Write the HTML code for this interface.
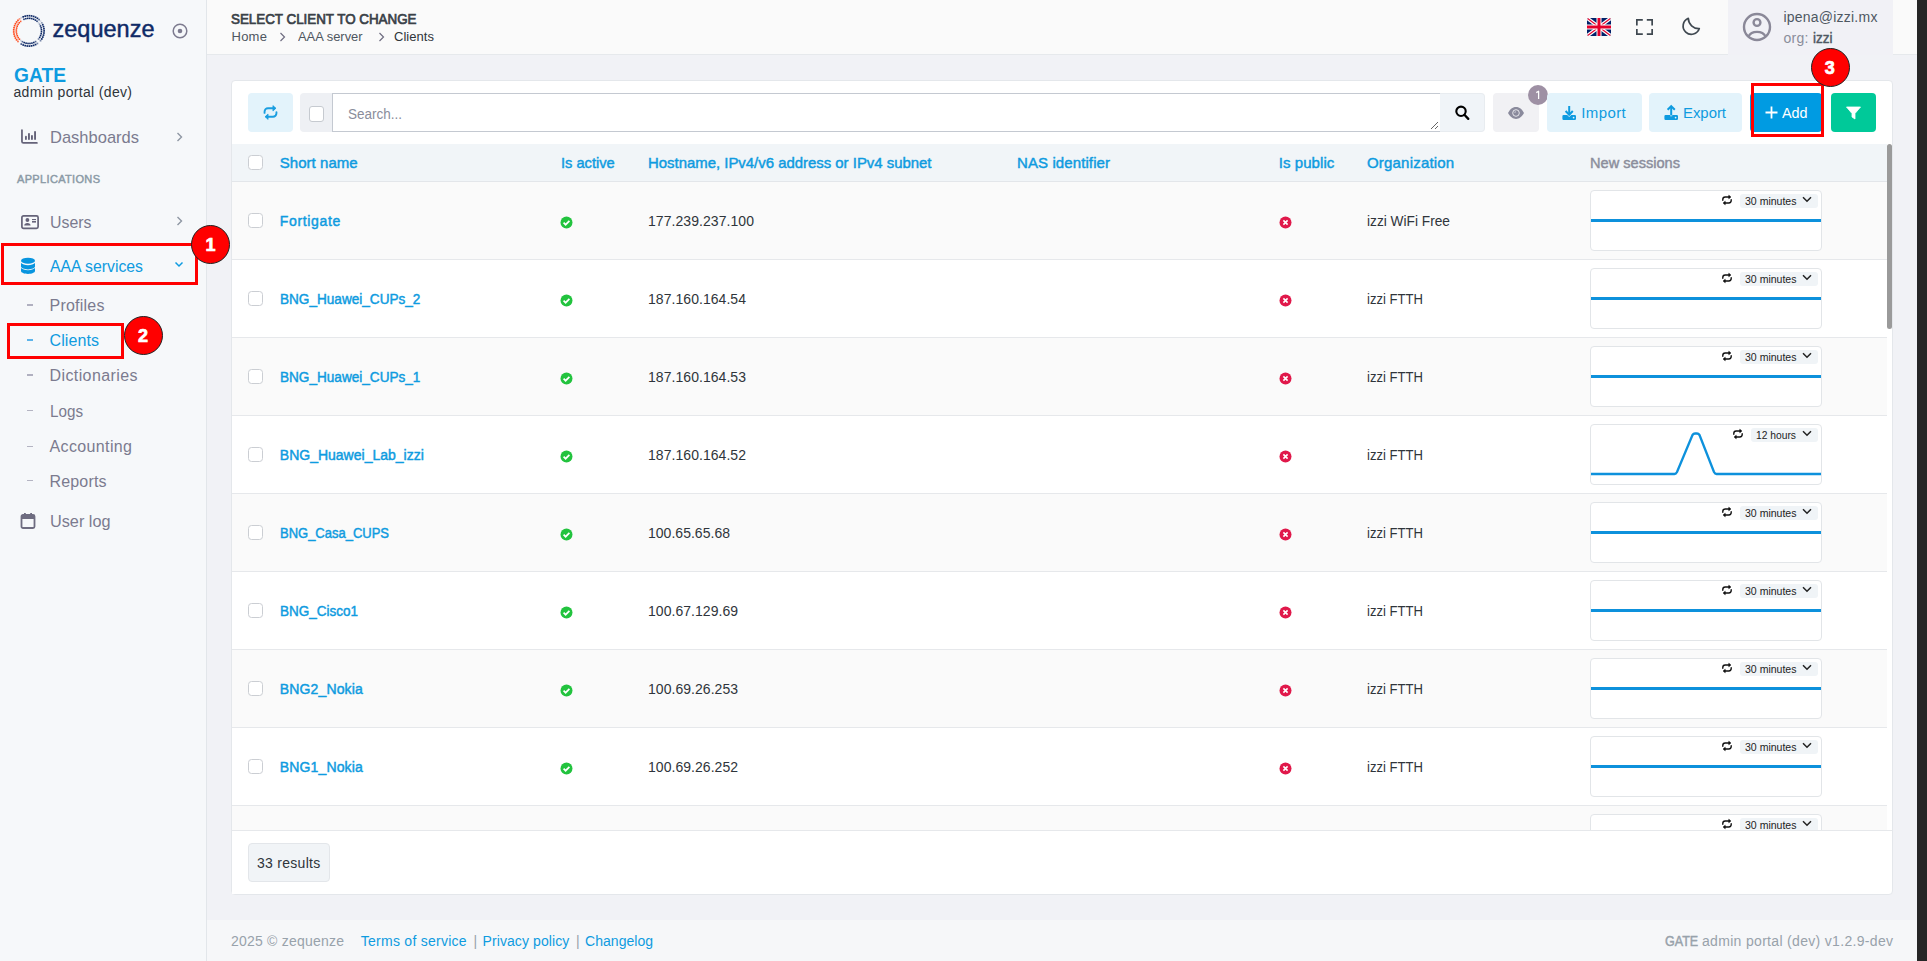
<!DOCTYPE html><html><head><meta charset="utf-8"><style>html,body{margin:0;padding:0;width:1927px;height:961px;overflow:hidden;position:relative;font-family:"Liberation Sans",sans-serif;}</style></head><body><div style="position:absolute;left:0px;top:0px;width:206px;height:961px;background:#f6f8fa;border-radius:0px;"></div>
<div style="position:absolute;left:206px;top:0px;width:1px;height:961px;background:#e2e6ea;border-radius:0px;"></div>
<div style="position:absolute;left:207px;top:0px;width:1710px;height:54px;background:#fafafa;border-radius:0px;"></div>
<div style="position:absolute;left:207px;top:54px;width:1710px;height:1px;background:#e6e9ec;border-radius:0px;"></div>
<div style="position:absolute;left:207px;top:55px;width:1710px;height:865px;background:#f1f2f6;border-radius:0px;"></div>
<div style="position:absolute;left:207px;top:920px;width:1710px;height:41px;background:#f6f7f9;border-radius:0px;"></div>
<div style="position:absolute;left:1917px;top:0px;width:10px;height:961px;background:#262626;border-radius:0px;"></div>
<svg style="position:absolute;left:0;top:0" width="60" height="60"><rect x="43.25" y="30.05" width="1.7" height="1.7" fill="#0f2a66" opacity="1.00"/><rect x="43.10" y="32.17" width="1.7" height="1.7" fill="#0f2a66" opacity="1.00"/><rect x="42.66" y="34.24" width="1.7" height="1.7" fill="#0f2a66" opacity="1.00"/><rect x="41.94" y="36.23" width="1.7" height="1.7" fill="#0f2a66" opacity="1.00"/><rect x="40.94" y="38.10" width="1.7" height="1.7" fill="#0f2a66" opacity="1.00"/><rect x="39.69" y="39.82" width="1.7" height="1.7" fill="#0f2a66" opacity="0.57"/><rect x="36.55" y="42.65" width="1.7" height="1.7" fill="#0f2a66" opacity="0.57"/><rect x="34.71" y="43.71" width="1.7" height="1.7" fill="#0f2a66" opacity="1.00"/><rect x="32.75" y="44.51" width="1.7" height="1.7" fill="#0f2a66" opacity="1.00"/><rect x="30.69" y="45.02" width="1.7" height="1.7" fill="#0f2a66" opacity="1.00"/><rect x="28.58" y="45.24" width="1.7" height="1.7" fill="#0f2a66" opacity="1.00"/><rect x="26.46" y="45.17" width="1.7" height="1.7" fill="#0f2a66" opacity="1.00"/><rect x="24.37" y="44.80" width="1.7" height="1.7" fill="#0f2a66" opacity="1.00"/><rect x="22.36" y="44.14" width="1.7" height="1.7" fill="#0f2a66" opacity="1.00"/><rect x="20.45" y="43.21" width="1.7" height="1.7" fill="#0f2a66" opacity="0.80"/><rect x="17.12" y="40.61" width="1.7" height="1.7" fill="#ff4a1c" opacity="0.80"/><rect x="15.75" y="38.98" width="1.7" height="1.7" fill="#ff4a1c" opacity="1.00"/><rect x="14.63" y="37.19" width="1.7" height="1.7" fill="#ff4a1c" opacity="1.00"/><rect x="13.77" y="35.25" width="1.7" height="1.7" fill="#ff4a1c" opacity="1.00"/><rect x="13.18" y="33.21" width="1.7" height="1.7" fill="#ff4a1c" opacity="1.00"/><rect x="12.89" y="31.11" width="1.7" height="1.7" fill="#ff4a1c" opacity="1.00"/><rect x="12.89" y="28.99" width="1.7" height="1.7" fill="#ff4a1c" opacity="1.00"/><rect x="13.18" y="26.89" width="1.7" height="1.7" fill="#ff4a1c" opacity="1.00"/><rect x="13.77" y="24.85" width="1.7" height="1.7" fill="#ff4a1c" opacity="1.00"/><rect x="14.63" y="22.91" width="1.7" height="1.7" fill="#ff4a1c" opacity="1.00"/><rect x="15.75" y="21.12" width="1.7" height="1.7" fill="#ff4a1c" opacity="1.00"/><rect x="17.12" y="19.49" width="1.7" height="1.7" fill="#ff4a1c" opacity="1.00"/><rect x="18.69" y="18.07" width="1.7" height="1.7" fill="#ff4a1c" opacity="0.60"/><rect x="20.45" y="16.89" width="1.7" height="1.7" fill="#0f2a66" opacity="0.20"/><rect x="22.36" y="15.96" width="1.7" height="1.7" fill="#0f2a66" opacity="1.00"/><rect x="24.37" y="15.30" width="1.7" height="1.7" fill="#0f2a66" opacity="1.00"/><rect x="26.46" y="14.93" width="1.7" height="1.7" fill="#0f2a66" opacity="1.00"/><rect x="28.58" y="14.86" width="1.7" height="1.7" fill="#0f2a66" opacity="1.00"/><rect x="30.69" y="15.08" width="1.7" height="1.7" fill="#0f2a66" opacity="1.00"/><rect x="32.75" y="15.59" width="1.7" height="1.7" fill="#0f2a66" opacity="1.00"/><rect x="34.71" y="16.39" width="1.7" height="1.7" fill="#0f2a66" opacity="1.00"/><rect x="36.55" y="17.45" width="1.7" height="1.7" fill="#0f2a66" opacity="1.00"/><rect x="38.22" y="18.75" width="1.7" height="1.7" fill="#0f2a66" opacity="0.71"/><rect x="39.69" y="20.28" width="1.7" height="1.7" fill="#0f2a66" opacity="0.14"/><rect x="40.94" y="22.00" width="1.7" height="1.7" fill="#0f2a66" opacity="0.43"/><rect x="41.94" y="23.87" width="1.7" height="1.7" fill="#0f2a66" opacity="1.00"/><rect x="42.66" y="25.86" width="1.7" height="1.7" fill="#0f2a66" opacity="1.00"/><rect x="43.10" y="27.93" width="1.7" height="1.7" fill="#0f2a66" opacity="1.00"/><rect x="40.67" y="30.98" width="1.6" height="1.6" fill="#0f2a66" opacity="1.00"/><rect x="40.38" y="32.93" width="1.6" height="1.6" fill="#0f2a66" opacity="1.00"/><rect x="39.78" y="34.82" width="1.6" height="1.6" fill="#0f2a66" opacity="1.00"/><rect x="38.90" y="36.59" width="1.6" height="1.6" fill="#0f2a66" opacity="1.00"/><rect x="37.75" y="38.20" width="1.6" height="1.6" fill="#0f2a66" opacity="0.57"/><rect x="34.78" y="40.79" width="1.6" height="1.6" fill="#0f2a66" opacity="0.71"/><rect x="33.02" y="41.70" width="1.6" height="1.6" fill="#0f2a66" opacity="1.00"/><rect x="31.15" y="42.33" width="1.6" height="1.6" fill="#0f2a66" opacity="1.00"/><rect x="29.20" y="42.65" width="1.6" height="1.6" fill="#0f2a66" opacity="1.00"/><rect x="27.22" y="42.67" width="1.6" height="1.6" fill="#0f2a66" opacity="1.00"/><rect x="25.27" y="42.38" width="1.6" height="1.6" fill="#0f2a66" opacity="1.00"/><rect x="23.38" y="41.78" width="1.6" height="1.6" fill="#0f2a66" opacity="1.00"/><rect x="21.61" y="40.90" width="1.6" height="1.6" fill="#0f2a66" opacity="0.70"/><rect x="20.00" y="39.75" width="1.6" height="1.6" fill="#0f2a66" opacity="0.20"/><rect x="18.59" y="38.37" width="1.6" height="1.6" fill="#ff4a1c" opacity="1.00"/><rect x="17.41" y="36.78" width="1.6" height="1.6" fill="#ff4a1c" opacity="1.00"/><rect x="16.50" y="35.02" width="1.6" height="1.6" fill="#ff4a1c" opacity="1.00"/><rect x="15.87" y="33.15" width="1.6" height="1.6" fill="#ff4a1c" opacity="1.00"/><rect x="15.55" y="31.20" width="1.6" height="1.6" fill="#ff4a1c" opacity="1.00"/><rect x="15.53" y="29.22" width="1.6" height="1.6" fill="#ff4a1c" opacity="1.00"/><rect x="15.82" y="27.27" width="1.6" height="1.6" fill="#ff4a1c" opacity="1.00"/><rect x="16.42" y="25.38" width="1.6" height="1.6" fill="#ff4a1c" opacity="1.00"/><rect x="17.30" y="23.61" width="1.6" height="1.6" fill="#ff4a1c" opacity="1.00"/><rect x="18.45" y="22.00" width="1.6" height="1.6" fill="#ff4a1c" opacity="1.00"/><rect x="19.83" y="20.59" width="1.6" height="1.6" fill="#ff4a1c" opacity="0.90"/><rect x="23.18" y="18.50" width="1.6" height="1.6" fill="#0f2a66" opacity="0.90"/><rect x="25.05" y="17.87" width="1.6" height="1.6" fill="#0f2a66" opacity="1.00"/><rect x="27.00" y="17.55" width="1.6" height="1.6" fill="#0f2a66" opacity="1.00"/><rect x="28.98" y="17.53" width="1.6" height="1.6" fill="#0f2a66" opacity="1.00"/><rect x="30.93" y="17.82" width="1.6" height="1.6" fill="#0f2a66" opacity="1.00"/><rect x="32.82" y="18.42" width="1.6" height="1.6" fill="#0f2a66" opacity="1.00"/><rect x="34.59" y="19.30" width="1.6" height="1.6" fill="#0f2a66" opacity="1.00"/><rect x="36.20" y="20.45" width="1.6" height="1.6" fill="#0f2a66" opacity="0.86"/><rect x="37.61" y="21.83" width="1.6" height="1.6" fill="#0f2a66" opacity="0.21"/><rect x="38.79" y="23.42" width="1.6" height="1.6" fill="#0f2a66" opacity="0.43"/><rect x="39.70" y="25.18" width="1.6" height="1.6" fill="#0f2a66" opacity="1.00"/><rect x="40.33" y="27.05" width="1.6" height="1.6" fill="#0f2a66" opacity="1.00"/><rect x="40.65" y="29.00" width="1.6" height="1.6" fill="#0f2a66" opacity="1.00"/></svg>
<svg style="position:absolute;left:50px;top:14px" width="110" height="34"><text x="2.5" y="23" font-family="Liberation Sans" font-size="24" fill="#0f2a66" stroke="#0f2a66" stroke-width="0.45" textLength="102" lengthAdjust="spacingAndGlyphs">zequenze</text></svg>
<svg style="position:absolute;left:171px;top:22px;" width="18" height="18" viewBox="0 0 18 18"><circle cx="9" cy="9" r="6.8" fill="none" stroke="#7d7b8f" stroke-width="1.5"/><circle cx="9" cy="9" r="2.3" fill="#7d7b8f"/></svg>
<div id="t0" style="position:absolute;left:14px;top:65.07px;font-size:20px;line-height:20px;color:#0e9be0;font-weight:700;letter-spacing:0.000px;white-space:nowrap;transform:scaleX(0.9616);transform-origin:0 0;">GATE</div>
<div id="t1" style="position:absolute;left:13.5px;top:85.35px;font-size:14px;line-height:14px;color:#2f353b;font-weight:400;letter-spacing:0.334px;white-space:nowrap;">admin portal (dev)</div>
<svg style="position:absolute;left:20px;top:129px;" width="18" height="16" viewBox="0 0 18 16"><path d="M1.95 1V12.4Q1.95 13.9 3.45 13.9H16.9" fill="none" stroke="#656379" stroke-width="1.75" stroke-linecap="round"/><rect x="5" y="6.8" width="1.85" height="4.2" rx="0.9" fill="#656379"/><rect x="8" y="3.9" width="1.9" height="7.1" rx="0.9" fill="#656379"/><rect x="11" y="6" width="1.9" height="5" rx="0.9" fill="#656379"/><rect x="14.1" y="2" width="1.9" height="9" rx="0.9" fill="#656379"/></svg>
<div id="t2" style="position:absolute;left:49.5px;top:128.61px;font-size:17px;line-height:17px;color:#7b7b8f;font-weight:400;letter-spacing:0.000px;white-space:nowrap;transform:scaleX(0.9709);transform-origin:0 0;">Dashboards</div>
<svg style="position:absolute;left:176px;top:132px;" width="8" height="10" viewBox="0 0 8 10"><path d="M1.5 1l4 4-4 4" fill="none" stroke="#8e97a3" stroke-width="1.4"/></svg>
<div id="t3" style="position:absolute;left:17px;top:173.89px;font-size:11px;line-height:11px;color:#8b9aa6;-webkit-text-stroke:0.45px #8b9aa6;letter-spacing:0.339px;white-space:nowrap;">APPLICATIONS</div>
<svg style="position:absolute;left:20px;top:214px;" width="20" height="16" viewBox="0 0 20 16"><rect x="1.9" y="1.9" width="16.2" height="12.4" rx="1.6" fill="none" stroke="#656379" stroke-width="1.7"/><circle cx="7.4" cy="6" r="1.9" fill="#656379"/><path d="M4.2 11.6c0-1.6 1.3-2.5 3.2-2.5s3.2 0.9 3.2 2.5z" fill="#656379"/><rect x="12" y="5" width="4" height="1.1" fill="#656379"/><rect x="12" y="7" width="4" height="1.6" fill="#656379"/></svg>
<div id="t4" style="position:absolute;left:49.5px;top:213.61px;font-size:17px;line-height:17px;color:#7b7b8f;font-weight:400;letter-spacing:0.000px;white-space:nowrap;transform:scaleX(0.9346);transform-origin:0 0;">Users</div>
<svg style="position:absolute;left:176px;top:216px;" width="8" height="10" viewBox="0 0 8 10"><path d="M1.5 1l4 4-4 4" fill="none" stroke="#8e97a3" stroke-width="1.4"/></svg>
<svg style="position:absolute;left:20px;top:257px;" width="16" height="18" viewBox="0 0 16 18"><ellipse cx="8" cy="3.7" rx="7" ry="3" fill="#0895df"/><path d="M1 6.1c1.2 1.2 3.8 2.1 7 2.1s5.8-0.9 7-2.1v3.5c0 1.5-3.1 2.8-7 2.8s-7-1.3-7-2.8z" fill="#0895df"/><path d="M1 11.1c1.2 1.2 3.8 2.1 7 2.1s5.8-0.9 7-2.1v3c0 1.6-3.1 2.9-7 2.9s-7-1.3-7-2.9z" fill="#0895df"/></svg>
<div id="t5" style="position:absolute;left:49.5px;top:258.21px;font-size:17px;line-height:17px;color:#0e9be0;font-weight:400;letter-spacing:0.000px;white-space:nowrap;transform:scaleX(0.9285);transform-origin:0 0;">AAA services</div>
<svg style="position:absolute;left:174px;top:261px;" width="10" height="8" viewBox="0 0 10 8"><path d="M1.5 1.5l3.5 3.5 3.5-3.5" fill="none" stroke="#0e9be0" stroke-width="1.5"/></svg>
<div style="position:absolute;left:27px;top:304px;width:6px;height:2px;background:#b0b0c0;border-radius:0px;"></div>
<div id="t6" style="position:absolute;left:49.5px;top:298.26px;font-size:16px;line-height:16px;color:#7b7b8f;font-weight:400;letter-spacing:0.234px;white-space:nowrap;">Profiles</div>
<div style="position:absolute;left:27px;top:339px;width:6px;height:2px;background:#5db4ea;border-radius:0px;"></div>
<div id="t7" style="position:absolute;left:49.5px;top:333.36px;font-size:16px;line-height:16px;color:#0e9be0;font-weight:400;letter-spacing:0.099px;white-space:nowrap;">Clients</div>
<div style="position:absolute;left:27px;top:374px;width:6px;height:2px;background:#b0b0c0;border-radius:0px;"></div>
<div id="t8" style="position:absolute;left:49.5px;top:368.46px;font-size:16px;line-height:16px;color:#7b7b8f;font-weight:400;letter-spacing:0.401px;white-space:nowrap;">Dictionaries</div>
<div style="position:absolute;left:27px;top:410px;width:6px;height:1px;background:#b4b4c2;border-radius:0px;"></div>
<div id="t9" style="position:absolute;left:49.5px;top:403.76px;font-size:16px;line-height:16px;color:#7b7b8f;font-weight:400;letter-spacing:0.000px;white-space:nowrap;transform:scaleX(0.9509);transform-origin:0 0;">Logs</div>
<div style="position:absolute;left:27px;top:446px;width:6px;height:1px;background:#b4b4c2;border-radius:0px;"></div>
<div id="t10" style="position:absolute;left:49.5px;top:439.26px;font-size:16px;line-height:16px;color:#7b7b8f;font-weight:400;letter-spacing:0.370px;white-space:nowrap;">Accounting</div>
<div style="position:absolute;left:27px;top:480px;width:6px;height:1px;background:#b4b4c2;border-radius:0px;"></div>
<div id="t11" style="position:absolute;left:49.5px;top:473.96px;font-size:16px;line-height:16px;color:#7b7b8f;font-weight:400;letter-spacing:0.161px;white-space:nowrap;">Reports</div>
<svg style="position:absolute;left:20px;top:512px;" width="16" height="17" viewBox="0 0 16 17"><rect x="1.5" y="3" width="13" height="13" rx="1.5" fill="none" stroke="#6e6c80" stroke-width="1.8"/><rect x="1.5" y="3" width="13" height="4" fill="#6e6c80"/><rect x="4" y="1" width="1.8" height="3" fill="#6e6c80"/><rect x="10.2" y="1" width="1.8" height="3" fill="#6e6c80"/></svg>
<div id="t12" style="position:absolute;left:49.5px;top:512.61px;font-size:17px;line-height:17px;color:#7b7b8f;font-weight:400;letter-spacing:0.000px;white-space:nowrap;transform:scaleX(0.9556);transform-origin:0 0;">User log</div>
<div id="t13" style="position:absolute;left:231.25px;top:12.15px;font-size:14px;line-height:14px;color:#3a4148;-webkit-text-stroke:0.7px #3a4148;letter-spacing:0.000px;white-space:nowrap;transform:scaleX(0.9550);transform-origin:0 0;">SELECT CLIENT TO CHANGE</div>
<div id="t14" style="position:absolute;left:231.6px;top:30.10px;font-size:13px;line-height:13px;color:#4e5660;font-weight:400;letter-spacing:0.204px;white-space:nowrap;">Home</div>
<svg style="position:absolute;left:279px;top:32px;" width="8" height="10" viewBox="0 0 8 10"><path d="M1.5 1l4 4-4 4" fill="none" stroke="#6e6c80" stroke-width="1.2"/></svg>
<div id="t15" style="position:absolute;left:298.4px;top:30.10px;font-size:13px;line-height:13px;color:#4e5660;font-weight:400;letter-spacing:0.000px;white-space:nowrap;transform:scaleX(0.9934);transform-origin:0 0;">AAA server</div>
<svg style="position:absolute;left:378px;top:32px;" width="8" height="10" viewBox="0 0 8 10"><path d="M1.5 1l4 4-4 4" fill="none" stroke="#6e6c80" stroke-width="1.2"/></svg>
<div id="t16" style="position:absolute;left:394px;top:30.10px;font-size:13px;line-height:13px;color:#2f353b;font-weight:400;letter-spacing:0.042px;white-space:nowrap;">Clients</div>
<svg style="position:absolute;left:1587px;top:18px;" width="24" height="18" viewBox="0 0 24 18"><defs><clipPath id="fc"><rect x="0" y="0" width="24" height="18" rx="2"/></clipPath></defs>
<g clip-path="url(#fc)"><rect width="24" height="18" fill="#012169"/>
<path d="M0 0L24 18M24 0L0 18" stroke="#fff" stroke-width="3.6"/>
<path d="M0 0L24 18M24 0L0 18" stroke="#e4002b" stroke-width="1.2"/>
<path d="M12 0v18M0 9h24" stroke="#fff" stroke-width="5"/>
<path d="M12 0v18M0 9h24" stroke="#e4002b" stroke-width="3"/></g></svg>
<svg style="position:absolute;left:1636px;top:19px;" width="17" height="16" viewBox="0 0 17 16"><path d="M0.85 6.6V0.85H6.8M10.8 0.85H16.15V6.6M16.15 10V15.15H10.8M6.8 15.15H0.85V10" fill="none" stroke="#3f4850" stroke-width="1.7"/></svg>
<svg style="position:absolute;left:1681px;top:17px;" width="20" height="20" viewBox="0 0 20 20"><path d="M7.3 1.3A8.3 8.3 0 1 0 18.3 11.6A10.5 10.5 0 0 1 7.3 1.3Z" fill="none" stroke="#3f4850" stroke-width="1.7" stroke-linejoin="round"/></svg>
<div style="position:absolute;left:1728px;top:0px;width:165px;height:55px;background:#f1f1f6;border-radius:0px;"></div>
<svg style="position:absolute;left:1742px;top:12px;" width="30" height="30" viewBox="0 0 30 30"><circle cx="15" cy="15" r="13" fill="none" stroke="#8a8898" stroke-width="2.4"/><circle cx="15" cy="10.5" r="3.4" fill="none" stroke="#8a8898" stroke-width="2.4"/><path d="M6.5 24.5c1.5-3.2 4.5-4.6 8.5-4.6s7 1.4 8.5 4.6" fill="none" stroke="#8a8898" stroke-width="2.4"/></svg>
<div id="t17" style="position:absolute;left:1783.4px;top:10.15px;font-size:14px;line-height:14px;color:#4e5862;font-weight:400;letter-spacing:0.229px;white-space:nowrap;">ipena@izzi.mx</div>
<div id="t18" style="position:absolute;left:1783.4px;top:30.55px;font-size:14px;line-height:14px;color:#8a8d9b;font-weight:400;letter-spacing:0.292px;white-space:nowrap;">org:</div>
<div id="t19" style="position:absolute;left:1812.5px;top:30.55px;font-size:14px;line-height:14px;color:#4e5862;-webkit-text-stroke:0.45px #4e5862;letter-spacing:0.000px;white-space:nowrap;transform:scaleX(0.9637);transform-origin:0 0;">izzi</div>
<div style="position:absolute;left:231px;top:80px;width:1662px;height:815px;background:#ffffff;border:1px solid #e4e7eb;box-sizing:border-box;border-radius:4px;"></div>
<div style="position:absolute;left:248px;top:93px;width:45px;height:39px;background:#e3f3fb;border-radius:4px;"></div>
<svg style="position:absolute;left:262px;top:104px;" width="17" height="17" viewBox="0 0 20 18"><path d="M3 9.5V8a4 4 0 0 1 4-4h8" fill="none" stroke="#1a9ee0" stroke-width="2.2" stroke-linecap="round"/><path d="M13 1.2l3 2.8-3 2.8z" fill="#1a9ee0" stroke="#1a9ee0" stroke-width="1.2" stroke-linejoin="round"/><path d="M17 8.5V10a4 4 0 0 1-4 4H5" fill="none" stroke="#1a9ee0" stroke-width="2.2" stroke-linecap="round"/><path d="M7 11.2L4 14l3 2.8z" fill="#1a9ee0" stroke="#1a9ee0" stroke-width="1.2" stroke-linejoin="round"/></svg>
<div style="position:absolute;left:300px;top:93px;width:33px;height:39px;background:#eef0f4;border-radius:0px;border-radius:4px 0 0 4px;"></div>
<div style="position:absolute;left:309px;top:106px;width:15px;height:15.5px;background:#fff;border:1px solid #c6cad0;box-sizing:border-box;border-radius:3px;"></div>
<div style="position:absolute;left:332px;top:93px;width:1109px;height:39px;background:#fff;border:1px solid #c4c9d1;box-sizing:border-box;border-radius:0px;"></div>
<svg style="position:absolute;left:1429px;top:120px;" width="10" height="10" viewBox="0 0 10 10"><path d="M9 2L2 9M9 6L6 9" stroke="#555" stroke-width="0.9"/></svg>
<div id="t20" style="position:absolute;left:348px;top:107.35px;font-size:14px;line-height:14px;color:#8a8d9b;font-weight:400;letter-spacing:0.000px;white-space:nowrap;transform:scaleX(0.9637);transform-origin:0 0;">Search...</div>
<div style="position:absolute;left:1440px;top:93px;width:45px;height:39px;background:#f0f4f8;border:1px solid #e8ecf0;box-sizing:border-box;border-radius:0px;border-radius:0 4px 4px 0;border-left:none;"></div>
<svg style="position:absolute;left:1455px;top:105px;" width="16" height="16" viewBox="0 0 16 16"><circle cx="6" cy="6.3" r="4.7" fill="none" stroke="#000" stroke-width="2.1"/><path d="M9.4 9.8l3.9 4.1" stroke="#000" stroke-width="2.3" stroke-linecap="round"/></svg>
<div style="position:absolute;left:1493px;top:93px;width:46px;height:39px;background:#f1f1f4;border-radius:4px;"></div>
<svg style="position:absolute;left:1507px;top:106px;" width="18" height="14" viewBox="0 0 18 14"><path d="M1 7C3.5 2.6 6.2 1.1 9 1.1S14.5 2.6 17 7c-2.5 4.4-5.2 5.9-8 5.9S3.5 11.4 1 7z" fill="#8a8a9c"/><circle cx="9" cy="7" r="3.3" fill="none" stroke="#f1f1f4" stroke-width="0.9"/><circle cx="9" cy="7" r="2.3" fill="#8a8a9c"/><path d="M7.2 6.6A2 2 0 0 1 8.6 5.2L8.6 6.6z" fill="#f1f1f4"/></svg>
<div style="position:absolute;left:1528px;top:85px;width:20px;height:20px;border-radius:50%;background:#9e90a4;"></div>
<svg style="position:absolute;left:1534px;top:90px;" width="8" height="10" viewBox="0 0 8 10"><path d="M2.3 2.6L4.6 1.2V9" fill="none" stroke="#fff" stroke-width="1.25" stroke-linejoin="round"/></svg>
<div style="position:absolute;left:1547px;top:93px;width:95px;height:39px;background:#e3f3fb;border-radius:4px;"></div>
<svg style="position:absolute;left:1562px;top:105px;" width="16" height="17" viewBox="0 0 16 17"><path d="M7.2 1v8.5" stroke="#0e9be0" stroke-width="2"/><path d="M3.6 6L7.2 9.7 10.8 6" fill="none" stroke="#0e9be0" stroke-width="2"/><path d="M0.4 11.2Q0.4 10 1.6 10H5.2L7.2 12 9.2 10H12.8Q14 10 14 11.2V13.8Q14 15 12.8 15H1.6Q0.4 15 0.4 13.8z" fill="#0e9be0"/><circle cx="11.6" cy="12.6" r="0.85" fill="#e3f3fb"/></svg>
<div id="t21" style="position:absolute;left:1581.3px;top:105.30px;font-size:15px;line-height:15px;color:#0e9be0;font-weight:400;letter-spacing:0.377px;white-space:nowrap;">Import</div>
<div style="position:absolute;left:1649px;top:93px;width:93px;height:39px;background:#e3f3fb;border-radius:4px;"></div>
<svg style="position:absolute;left:1664px;top:104px;" width="16" height="18" viewBox="0 0 16 18"><path d="M7.2 11.5V3" stroke="#0e9be0" stroke-width="2"/><path d="M3.6 5.8L7.2 2.2 10.8 5.8" fill="none" stroke="#0e9be0" stroke-width="2"/><path d="M0.4 12.2Q0.4 11 1.6 11H6.2V12.2H8.2V11H12.8Q14 11 14 12.2V14.8Q14 16 12.8 16H1.6Q0.4 16 0.4 14.8z" fill="#0e9be0"/><circle cx="11.6" cy="13.6" r="0.85" fill="#e3f3fb"/></svg>
<div id="t22" style="position:absolute;left:1683.2px;top:105.30px;font-size:15px;line-height:15px;color:#0e9be0;font-weight:400;letter-spacing:0.000px;white-space:nowrap;transform:scaleX(0.9917);transform-origin:0 0;">Export</div>
<div style="position:absolute;left:1750px;top:93px;width:72px;height:39px;background:#009be2;border-radius:4px;"></div>
<svg style="position:absolute;left:1765px;top:106px;" width="13" height="13" viewBox="0 0 13 13"><path d="M6.5 0.5v12M0.5 6.5h12" stroke="#fff" stroke-width="1.8"/></svg>
<div id="t23" style="position:absolute;left:1781.7px;top:104.80px;font-size:15px;line-height:15px;color:#ffffff;font-weight:400;letter-spacing:0.000px;white-space:nowrap;transform:scaleX(0.9587);transform-origin:0 0;">Add</div>
<div style="position:absolute;left:1831px;top:93px;width:45px;height:39px;background:#00c999;border-radius:4px;"></div>
<svg style="position:absolute;left:1846px;top:106px;" width="15" height="14" viewBox="0 0 15 14"><path d="M0.5 1h14L9 7.5V13L6 11V7.5z" fill="#fff" stroke="#fff" stroke-width="0.8" stroke-linejoin="round"/></svg>
<div style="position:absolute;left:232px;top:144px;width:1655px;height:37px;background:#f1f5f8;border-radius:0px;"></div>
<div style="position:absolute;left:232px;top:181px;width:1655px;height:1px;background:#e3e6ea;border-radius:0px;"></div>
<div style="position:absolute;left:248px;top:155px;width:15px;height:15px;background:#fff;border:1.5px solid #cbced3;box-sizing:border-box;border-radius:3.5px;"></div>
<div id="t24" style="position:absolute;left:279.7px;top:155.10px;font-size:15px;line-height:15px;color:#0e9be0;-webkit-text-stroke:0.45px #0e9be0;letter-spacing:0.050px;white-space:nowrap;">Short name</div>
<div id="t25" style="position:absolute;left:561px;top:155.10px;font-size:15px;line-height:15px;color:#0e9be0;-webkit-text-stroke:0.45px #0e9be0;letter-spacing:0.000px;white-space:nowrap;transform:scaleX(0.9758);transform-origin:0 0;">Is active</div>
<div id="t26" style="position:absolute;left:647.9px;top:155.10px;font-size:15px;line-height:15px;color:#0e9be0;-webkit-text-stroke:0.45px #0e9be0;letter-spacing:0.000px;white-space:nowrap;transform:scaleX(0.9942);transform-origin:0 0;">Hostname, IPv4/v6 address or IPv4 subnet</div>
<div id="t27" style="position:absolute;left:1017px;top:155.10px;font-size:15px;line-height:15px;color:#0e9be0;-webkit-text-stroke:0.45px #0e9be0;letter-spacing:0.099px;white-space:nowrap;">NAS identifier</div>
<div id="t28" style="position:absolute;left:1278.8px;top:155.10px;font-size:15px;line-height:15px;color:#0e9be0;-webkit-text-stroke:0.45px #0e9be0;letter-spacing:0.059px;white-space:nowrap;">Is public</div>
<div id="t29" style="position:absolute;left:1367px;top:155.10px;font-size:15px;line-height:15px;color:#0e9be0;-webkit-text-stroke:0.45px #0e9be0;letter-spacing:0.194px;white-space:nowrap;">Organization</div>
<div id="t30" style="position:absolute;left:1590px;top:155.10px;font-size:15px;line-height:15px;color:#8b8e9c;-webkit-text-stroke:0.45px #8b8e9c;letter-spacing:0.000px;white-space:nowrap;transform:scaleX(0.9725);transform-origin:0 0;">New sessions</div>
<div style="position:absolute;left:232px;top:182px;width:1655px;height:648px;overflow:hidden;">
<div style="position:absolute;left:0;top:0px;width:1655px;height:77px;background:#fafafa"></div>
<div style="position:absolute;left:0;top:77px;width:1655px;height:1px;background:#e6e8eb"></div>
<div style="position:absolute;left:0;top:78px;width:1655px;height:77px;background:#ffffff"></div>
<div style="position:absolute;left:0;top:155px;width:1655px;height:1px;background:#e6e8eb"></div>
<div style="position:absolute;left:0;top:156px;width:1655px;height:77px;background:#fafafa"></div>
<div style="position:absolute;left:0;top:233px;width:1655px;height:1px;background:#e6e8eb"></div>
<div style="position:absolute;left:0;top:234px;width:1655px;height:77px;background:#ffffff"></div>
<div style="position:absolute;left:0;top:311px;width:1655px;height:1px;background:#e6e8eb"></div>
<div style="position:absolute;left:0;top:312px;width:1655px;height:77px;background:#fafafa"></div>
<div style="position:absolute;left:0;top:389px;width:1655px;height:1px;background:#e6e8eb"></div>
<div style="position:absolute;left:0;top:390px;width:1655px;height:77px;background:#ffffff"></div>
<div style="position:absolute;left:0;top:467px;width:1655px;height:1px;background:#e6e8eb"></div>
<div style="position:absolute;left:0;top:468px;width:1655px;height:77px;background:#fafafa"></div>
<div style="position:absolute;left:0;top:545px;width:1655px;height:1px;background:#e6e8eb"></div>
<div style="position:absolute;left:0;top:546px;width:1655px;height:77px;background:#ffffff"></div>
<div style="position:absolute;left:0;top:623px;width:1655px;height:1px;background:#e6e8eb"></div>
<div style="position:absolute;left:0;top:624px;width:1655px;height:77px;background:#fafafa"></div>
<div style="position:absolute;left:0;top:701px;width:1655px;height:1px;background:#e6e8eb"></div>
</div>
<div style="position:absolute;left:248px;top:213.0px;width:15px;height:15px;background:#fff;border:1.5px solid #cbced3;box-sizing:border-box;border-radius:3.5px;"></div>
<div id="t31" style="position:absolute;left:279.8px;top:214.15px;font-size:14px;line-height:14px;color:#0e9be0;-webkit-text-stroke:0.45px #0e9be0;letter-spacing:0.656px;white-space:nowrap;">Fortigate</div>
<svg style="position:absolute;left:560px;top:216.0px;" width="13" height="13" viewBox="0 0 13 13"><circle cx="6.5" cy="6.5" r="6" fill="#22c33e"/><path d="M3.6 6.7l2 2 3.8-3.9" fill="none" stroke="#fff" stroke-width="1.7"/></svg>
<div id="t32" style="position:absolute;left:648px;top:214.15px;font-size:14px;line-height:14px;color:#2f353b;font-weight:400;letter-spacing:0.064px;white-space:nowrap;">177.239.237.100</div>
<svg style="position:absolute;left:1279px;top:216.0px;" width="13" height="13" viewBox="0 0 13 13"><circle cx="6.5" cy="6.5" r="6" fill="#e0184a"/><path d="M4.4 4.4l4.2 4.2M8.6 4.4l-4.2 4.2" stroke="#fff" stroke-width="1.6"/></svg>
<div id="t33" style="position:absolute;left:1367px;top:214.15px;font-size:14px;line-height:14px;color:#2f353b;font-weight:400;letter-spacing:0.000px;white-space:nowrap;transform:scaleX(0.9790);transform-origin:0 0;">izzi WiFi Free</div>
<div style="position:absolute;left:248px;top:291.0px;width:15px;height:15px;background:#fff;border:1.5px solid #cbced3;box-sizing:border-box;border-radius:3.5px;"></div>
<div id="t34" style="position:absolute;left:279.8px;top:292.15px;font-size:14px;line-height:14px;color:#0e9be0;-webkit-text-stroke:0.45px #0e9be0;letter-spacing:0.000px;white-space:nowrap;transform:scaleX(0.9701);transform-origin:0 0;">BNG_Huawei_CUPs_2</div>
<svg style="position:absolute;left:560px;top:294.0px;" width="13" height="13" viewBox="0 0 13 13"><circle cx="6.5" cy="6.5" r="6" fill="#22c33e"/><path d="M3.6 6.7l2 2 3.8-3.9" fill="none" stroke="#fff" stroke-width="1.7"/></svg>
<div id="t35" style="position:absolute;left:648px;top:292.15px;font-size:14px;line-height:14px;color:#2f353b;font-weight:400;letter-spacing:0.052px;white-space:nowrap;">187.160.164.54</div>
<svg style="position:absolute;left:1279px;top:294.0px;" width="13" height="13" viewBox="0 0 13 13"><circle cx="6.5" cy="6.5" r="6" fill="#e0184a"/><path d="M4.4 4.4l4.2 4.2M8.6 4.4l-4.2 4.2" stroke="#fff" stroke-width="1.6"/></svg>
<div id="t36" style="position:absolute;left:1367px;top:292.15px;font-size:14px;line-height:14px;color:#2f353b;font-weight:400;letter-spacing:0.000px;white-space:nowrap;transform:scaleX(0.9350);transform-origin:0 0;">izzi FTTH</div>
<div style="position:absolute;left:248px;top:369.0px;width:15px;height:15px;background:#fff;border:1.5px solid #cbced3;box-sizing:border-box;border-radius:3.5px;"></div>
<div id="t37" style="position:absolute;left:279.8px;top:370.15px;font-size:14px;line-height:14px;color:#0e9be0;-webkit-text-stroke:0.45px #0e9be0;letter-spacing:0.000px;white-space:nowrap;transform:scaleX(0.9701);transform-origin:0 0;">BNG_Huawei_CUPs_1</div>
<svg style="position:absolute;left:560px;top:372.0px;" width="13" height="13" viewBox="0 0 13 13"><circle cx="6.5" cy="6.5" r="6" fill="#22c33e"/><path d="M3.6 6.7l2 2 3.8-3.9" fill="none" stroke="#fff" stroke-width="1.7"/></svg>
<div id="t38" style="position:absolute;left:648px;top:370.15px;font-size:14px;line-height:14px;color:#2f353b;font-weight:400;letter-spacing:0.052px;white-space:nowrap;">187.160.164.53</div>
<svg style="position:absolute;left:1279px;top:372.0px;" width="13" height="13" viewBox="0 0 13 13"><circle cx="6.5" cy="6.5" r="6" fill="#e0184a"/><path d="M4.4 4.4l4.2 4.2M8.6 4.4l-4.2 4.2" stroke="#fff" stroke-width="1.6"/></svg>
<div id="t39" style="position:absolute;left:1367px;top:370.15px;font-size:14px;line-height:14px;color:#2f353b;font-weight:400;letter-spacing:0.000px;white-space:nowrap;transform:scaleX(0.9350);transform-origin:0 0;">izzi FTTH</div>
<div style="position:absolute;left:248px;top:447.0px;width:15px;height:15px;background:#fff;border:1.5px solid #cbced3;box-sizing:border-box;border-radius:3.5px;"></div>
<div id="t40" style="position:absolute;left:279.8px;top:448.15px;font-size:14px;line-height:14px;color:#0e9be0;-webkit-text-stroke:0.45px #0e9be0;letter-spacing:0.002px;white-space:nowrap;">BNG_Huawei_Lab_izzi</div>
<svg style="position:absolute;left:560px;top:450.0px;" width="13" height="13" viewBox="0 0 13 13"><circle cx="6.5" cy="6.5" r="6" fill="#22c33e"/><path d="M3.6 6.7l2 2 3.8-3.9" fill="none" stroke="#fff" stroke-width="1.7"/></svg>
<div id="t41" style="position:absolute;left:648px;top:448.15px;font-size:14px;line-height:14px;color:#2f353b;font-weight:400;letter-spacing:0.052px;white-space:nowrap;">187.160.164.52</div>
<svg style="position:absolute;left:1279px;top:450.0px;" width="13" height="13" viewBox="0 0 13 13"><circle cx="6.5" cy="6.5" r="6" fill="#e0184a"/><path d="M4.4 4.4l4.2 4.2M8.6 4.4l-4.2 4.2" stroke="#fff" stroke-width="1.6"/></svg>
<div id="t42" style="position:absolute;left:1367px;top:448.15px;font-size:14px;line-height:14px;color:#2f353b;font-weight:400;letter-spacing:0.000px;white-space:nowrap;transform:scaleX(0.9350);transform-origin:0 0;">izzi FTTH</div>
<div style="position:absolute;left:248px;top:525.0px;width:15px;height:15px;background:#fff;border:1.5px solid #cbced3;box-sizing:border-box;border-radius:3.5px;"></div>
<div id="t43" style="position:absolute;left:279.8px;top:526.15px;font-size:14px;line-height:14px;color:#0e9be0;-webkit-text-stroke:0.45px #0e9be0;letter-spacing:0.000px;white-space:nowrap;transform:scaleX(0.9277);transform-origin:0 0;">BNG_Casa_CUPS</div>
<svg style="position:absolute;left:560px;top:528.0px;" width="13" height="13" viewBox="0 0 13 13"><circle cx="6.5" cy="6.5" r="6" fill="#22c33e"/><path d="M3.6 6.7l2 2 3.8-3.9" fill="none" stroke="#fff" stroke-width="1.7"/></svg>
<div id="t44" style="position:absolute;left:648px;top:526.15px;font-size:14px;line-height:14px;color:#2f353b;font-weight:400;letter-spacing:0.023px;white-space:nowrap;">100.65.65.68</div>
<svg style="position:absolute;left:1279px;top:528.0px;" width="13" height="13" viewBox="0 0 13 13"><circle cx="6.5" cy="6.5" r="6" fill="#e0184a"/><path d="M4.4 4.4l4.2 4.2M8.6 4.4l-4.2 4.2" stroke="#fff" stroke-width="1.6"/></svg>
<div id="t45" style="position:absolute;left:1367px;top:526.15px;font-size:14px;line-height:14px;color:#2f353b;font-weight:400;letter-spacing:0.000px;white-space:nowrap;transform:scaleX(0.9350);transform-origin:0 0;">izzi FTTH</div>
<div style="position:absolute;left:248px;top:603.0px;width:15px;height:15px;background:#fff;border:1.5px solid #cbced3;box-sizing:border-box;border-radius:3.5px;"></div>
<div id="t46" style="position:absolute;left:279.8px;top:604.15px;font-size:14px;line-height:14px;color:#0e9be0;-webkit-text-stroke:0.45px #0e9be0;letter-spacing:0.000px;white-space:nowrap;transform:scaleX(0.9639);transform-origin:0 0;">BNG_Cisco1</div>
<svg style="position:absolute;left:560px;top:606.0px;" width="13" height="13" viewBox="0 0 13 13"><circle cx="6.5" cy="6.5" r="6" fill="#22c33e"/><path d="M3.6 6.7l2 2 3.8-3.9" fill="none" stroke="#fff" stroke-width="1.7"/></svg>
<div id="t47" style="position:absolute;left:648px;top:604.15px;font-size:14px;line-height:14px;color:#2f353b;font-weight:400;letter-spacing:0.039px;white-space:nowrap;">100.67.129.69</div>
<svg style="position:absolute;left:1279px;top:606.0px;" width="13" height="13" viewBox="0 0 13 13"><circle cx="6.5" cy="6.5" r="6" fill="#e0184a"/><path d="M4.4 4.4l4.2 4.2M8.6 4.4l-4.2 4.2" stroke="#fff" stroke-width="1.6"/></svg>
<div id="t48" style="position:absolute;left:1367px;top:604.15px;font-size:14px;line-height:14px;color:#2f353b;font-weight:400;letter-spacing:0.000px;white-space:nowrap;transform:scaleX(0.9350);transform-origin:0 0;">izzi FTTH</div>
<div style="position:absolute;left:248px;top:681.0px;width:15px;height:15px;background:#fff;border:1.5px solid #cbced3;box-sizing:border-box;border-radius:3.5px;"></div>
<div id="t49" style="position:absolute;left:279.8px;top:682.15px;font-size:14px;line-height:14px;color:#0e9be0;-webkit-text-stroke:0.45px #0e9be0;letter-spacing:0.144px;white-space:nowrap;">BNG2_Nokia</div>
<svg style="position:absolute;left:560px;top:684.0px;" width="13" height="13" viewBox="0 0 13 13"><circle cx="6.5" cy="6.5" r="6" fill="#22c33e"/><path d="M3.6 6.7l2 2 3.8-3.9" fill="none" stroke="#fff" stroke-width="1.7"/></svg>
<div id="t50" style="position:absolute;left:648px;top:682.15px;font-size:14px;line-height:14px;color:#2f353b;font-weight:400;letter-spacing:0.039px;white-space:nowrap;">100.69.26.253</div>
<svg style="position:absolute;left:1279px;top:684.0px;" width="13" height="13" viewBox="0 0 13 13"><circle cx="6.5" cy="6.5" r="6" fill="#e0184a"/><path d="M4.4 4.4l4.2 4.2M8.6 4.4l-4.2 4.2" stroke="#fff" stroke-width="1.6"/></svg>
<div id="t51" style="position:absolute;left:1367px;top:682.15px;font-size:14px;line-height:14px;color:#2f353b;font-weight:400;letter-spacing:0.000px;white-space:nowrap;transform:scaleX(0.9350);transform-origin:0 0;">izzi FTTH</div>
<div style="position:absolute;left:248px;top:759.0px;width:15px;height:15px;background:#fff;border:1.5px solid #cbced3;box-sizing:border-box;border-radius:3.5px;"></div>
<div id="t52" style="position:absolute;left:279.8px;top:760.15px;font-size:14px;line-height:14px;color:#0e9be0;-webkit-text-stroke:0.45px #0e9be0;letter-spacing:0.144px;white-space:nowrap;">BNG1_Nokia</div>
<svg style="position:absolute;left:560px;top:762.0px;" width="13" height="13" viewBox="0 0 13 13"><circle cx="6.5" cy="6.5" r="6" fill="#22c33e"/><path d="M3.6 6.7l2 2 3.8-3.9" fill="none" stroke="#fff" stroke-width="1.7"/></svg>
<div id="t53" style="position:absolute;left:648px;top:760.15px;font-size:14px;line-height:14px;color:#2f353b;font-weight:400;letter-spacing:0.039px;white-space:nowrap;">100.69.26.252</div>
<svg style="position:absolute;left:1279px;top:762.0px;" width="13" height="13" viewBox="0 0 13 13"><circle cx="6.5" cy="6.5" r="6" fill="#e0184a"/><path d="M4.4 4.4l4.2 4.2M8.6 4.4l-4.2 4.2" stroke="#fff" stroke-width="1.6"/></svg>
<div id="t54" style="position:absolute;left:1367px;top:760.15px;font-size:14px;line-height:14px;color:#2f353b;font-weight:400;letter-spacing:0.000px;white-space:nowrap;transform:scaleX(0.9350);transform-origin:0 0;">izzi FTTH</div>
<div style="position:absolute;left:1580px;top:182px;width:307px;height:648px;overflow:hidden;">
<div style="position:absolute;left:10px;top:8px;width:232px;height:61px;background:#fff;border:1px solid #e2e5e8;box-sizing:border-box;border-radius:4px;"></div><div style="position:absolute;left:11px;top:36.5px;width:230px;height:3px;background:#0d91dc"></div>
<div style="position:absolute;left:10px;top:86px;width:232px;height:61px;background:#fff;border:1px solid #e2e5e8;box-sizing:border-box;border-radius:4px;"></div><div style="position:absolute;left:11px;top:114.5px;width:230px;height:3px;background:#0d91dc"></div>
<div style="position:absolute;left:10px;top:164px;width:232px;height:61px;background:#fff;border:1px solid #e2e5e8;box-sizing:border-box;border-radius:4px;"></div><div style="position:absolute;left:11px;top:192.5px;width:230px;height:3px;background:#0d91dc"></div>
<div style="position:absolute;left:10px;top:242px;width:232px;height:61px;background:#fff;border:1px solid #e2e5e8;box-sizing:border-box;border-radius:4px;"></div><svg style="position:absolute;left:11px;top:242px" width="230" height="60"><path d="M0 50H83.5Q85 50 86 48L101.5 11Q102.5 9.5 104 9.5H106Q107.5 9.5 108.5 11L123 48Q124 50 125.5 50H230" fill="none" stroke="#0d91dc" stroke-width="2.3" stroke-linejoin="round"/></svg>
<div style="position:absolute;left:10px;top:320px;width:232px;height:61px;background:#fff;border:1px solid #e2e5e8;box-sizing:border-box;border-radius:4px;"></div><div style="position:absolute;left:11px;top:348.5px;width:230px;height:3px;background:#0d91dc"></div>
<div style="position:absolute;left:10px;top:398px;width:232px;height:61px;background:#fff;border:1px solid #e2e5e8;box-sizing:border-box;border-radius:4px;"></div><div style="position:absolute;left:11px;top:426.5px;width:230px;height:3px;background:#0d91dc"></div>
<div style="position:absolute;left:10px;top:476px;width:232px;height:61px;background:#fff;border:1px solid #e2e5e8;box-sizing:border-box;border-radius:4px;"></div><div style="position:absolute;left:11px;top:504.5px;width:230px;height:3px;background:#0d91dc"></div>
<div style="position:absolute;left:10px;top:554px;width:232px;height:61px;background:#fff;border:1px solid #e2e5e8;box-sizing:border-box;border-radius:4px;"></div><div style="position:absolute;left:11px;top:582.5px;width:230px;height:3px;background:#0d91dc"></div>
<div style="position:absolute;left:10px;top:632px;width:232px;height:61px;background:#fff;border:1px solid #e2e5e8;box-sizing:border-box;border-radius:4px;"></div><div style="position:absolute;left:11px;top:660.5px;width:230px;height:3px;background:#0d91dc"></div>
</div>
<div style="position:absolute;left:1740px;top:194px;width:78px;height:14px;background:#f0f4f7;border-radius:3px;"></div>
<svg style="position:absolute;left:1721px;top:194px;" width="12" height="12" viewBox="0 0 20 18"><path d="M3 9.5V8a4 4 0 0 1 4-4h8" fill="none" stroke="#111" stroke-width="2.3" stroke-linecap="round"/><path d="M13 1.2l3 2.8-3 2.8z" fill="#111" stroke="#111" stroke-width="1.2" stroke-linejoin="round"/><path d="M17 8.5V10a4 4 0 0 1-4 4H5" fill="none" stroke="#111" stroke-width="2.3" stroke-linecap="round"/><path d="M7 11.2L4 14l3 2.8z" fill="#111" stroke="#111" stroke-width="1.2" stroke-linejoin="round"/></svg>
<div id="t55" style="position:absolute;left:1744.5px;top:196.07px;font-size:11.5px;line-height:11.5px;color:#222;font-weight:400;letter-spacing:0.000px;white-space:nowrap;transform:scaleX(0.9153);transform-origin:0 0;">30 minutes</div>
<svg style="position:absolute;left:1802px;top:196px;" width="10" height="7" viewBox="0 0 10 7"><path d="M1 1.2l4 4 4-4" fill="none" stroke="#222" stroke-width="1.5"/></svg>
<div style="position:absolute;left:1740px;top:272px;width:78px;height:14px;background:#f0f4f7;border-radius:3px;"></div>
<svg style="position:absolute;left:1721px;top:272px;" width="12" height="12" viewBox="0 0 20 18"><path d="M3 9.5V8a4 4 0 0 1 4-4h8" fill="none" stroke="#111" stroke-width="2.3" stroke-linecap="round"/><path d="M13 1.2l3 2.8-3 2.8z" fill="#111" stroke="#111" stroke-width="1.2" stroke-linejoin="round"/><path d="M17 8.5V10a4 4 0 0 1-4 4H5" fill="none" stroke="#111" stroke-width="2.3" stroke-linecap="round"/><path d="M7 11.2L4 14l3 2.8z" fill="#111" stroke="#111" stroke-width="1.2" stroke-linejoin="round"/></svg>
<div id="t56" style="position:absolute;left:1744.5px;top:274.07px;font-size:11.5px;line-height:11.5px;color:#222;font-weight:400;letter-spacing:0.000px;white-space:nowrap;transform:scaleX(0.9153);transform-origin:0 0;">30 minutes</div>
<svg style="position:absolute;left:1802px;top:274px;" width="10" height="7" viewBox="0 0 10 7"><path d="M1 1.2l4 4 4-4" fill="none" stroke="#222" stroke-width="1.5"/></svg>
<div style="position:absolute;left:1740px;top:350px;width:78px;height:14px;background:#f0f4f7;border-radius:3px;"></div>
<svg style="position:absolute;left:1721px;top:350px;" width="12" height="12" viewBox="0 0 20 18"><path d="M3 9.5V8a4 4 0 0 1 4-4h8" fill="none" stroke="#111" stroke-width="2.3" stroke-linecap="round"/><path d="M13 1.2l3 2.8-3 2.8z" fill="#111" stroke="#111" stroke-width="1.2" stroke-linejoin="round"/><path d="M17 8.5V10a4 4 0 0 1-4 4H5" fill="none" stroke="#111" stroke-width="2.3" stroke-linecap="round"/><path d="M7 11.2L4 14l3 2.8z" fill="#111" stroke="#111" stroke-width="1.2" stroke-linejoin="round"/></svg>
<div id="t57" style="position:absolute;left:1744.5px;top:352.07px;font-size:11.5px;line-height:11.5px;color:#222;font-weight:400;letter-spacing:0.000px;white-space:nowrap;transform:scaleX(0.9153);transform-origin:0 0;">30 minutes</div>
<svg style="position:absolute;left:1802px;top:352px;" width="10" height="7" viewBox="0 0 10 7"><path d="M1 1.2l4 4 4-4" fill="none" stroke="#222" stroke-width="1.5"/></svg>
<div style="position:absolute;left:1751px;top:428px;width:67px;height:13.5px;background:#f0f4f7;border-radius:3px;"></div>
<svg style="position:absolute;left:1732px;top:428px;" width="12" height="12" viewBox="0 0 20 18"><path d="M3 9.5V8a4 4 0 0 1 4-4h8" fill="none" stroke="#111" stroke-width="2.3" stroke-linecap="round"/><path d="M13 1.2l3 2.8-3 2.8z" fill="#111" stroke="#111" stroke-width="1.2" stroke-linejoin="round"/><path d="M17 8.5V10a4 4 0 0 1-4 4H5" fill="none" stroke="#111" stroke-width="2.3" stroke-linecap="round"/><path d="M7 11.2L4 14l3 2.8z" fill="#111" stroke="#111" stroke-width="1.2" stroke-linejoin="round"/></svg>
<div id="t58" style="position:absolute;left:1756px;top:430.47px;font-size:11.5px;line-height:11.5px;color:#222;font-weight:400;letter-spacing:0.000px;white-space:nowrap;transform:scaleX(0.8935);transform-origin:0 0;">12 hours</div>
<svg style="position:absolute;left:1802px;top:430px;" width="10" height="7" viewBox="0 0 10 7"><path d="M1 1.2l4 4 4-4" fill="none" stroke="#222" stroke-width="1.5"/></svg>
<div style="position:absolute;left:1740px;top:506px;width:78px;height:14px;background:#f0f4f7;border-radius:3px;"></div>
<svg style="position:absolute;left:1721px;top:506px;" width="12" height="12" viewBox="0 0 20 18"><path d="M3 9.5V8a4 4 0 0 1 4-4h8" fill="none" stroke="#111" stroke-width="2.3" stroke-linecap="round"/><path d="M13 1.2l3 2.8-3 2.8z" fill="#111" stroke="#111" stroke-width="1.2" stroke-linejoin="round"/><path d="M17 8.5V10a4 4 0 0 1-4 4H5" fill="none" stroke="#111" stroke-width="2.3" stroke-linecap="round"/><path d="M7 11.2L4 14l3 2.8z" fill="#111" stroke="#111" stroke-width="1.2" stroke-linejoin="round"/></svg>
<div id="t59" style="position:absolute;left:1744.5px;top:508.07px;font-size:11.5px;line-height:11.5px;color:#222;font-weight:400;letter-spacing:0.000px;white-space:nowrap;transform:scaleX(0.9153);transform-origin:0 0;">30 minutes</div>
<svg style="position:absolute;left:1802px;top:508px;" width="10" height="7" viewBox="0 0 10 7"><path d="M1 1.2l4 4 4-4" fill="none" stroke="#222" stroke-width="1.5"/></svg>
<div style="position:absolute;left:1740px;top:584px;width:78px;height:14px;background:#f0f4f7;border-radius:3px;"></div>
<svg style="position:absolute;left:1721px;top:584px;" width="12" height="12" viewBox="0 0 20 18"><path d="M3 9.5V8a4 4 0 0 1 4-4h8" fill="none" stroke="#111" stroke-width="2.3" stroke-linecap="round"/><path d="M13 1.2l3 2.8-3 2.8z" fill="#111" stroke="#111" stroke-width="1.2" stroke-linejoin="round"/><path d="M17 8.5V10a4 4 0 0 1-4 4H5" fill="none" stroke="#111" stroke-width="2.3" stroke-linecap="round"/><path d="M7 11.2L4 14l3 2.8z" fill="#111" stroke="#111" stroke-width="1.2" stroke-linejoin="round"/></svg>
<div id="t60" style="position:absolute;left:1744.5px;top:586.07px;font-size:11.5px;line-height:11.5px;color:#222;font-weight:400;letter-spacing:0.000px;white-space:nowrap;transform:scaleX(0.9153);transform-origin:0 0;">30 minutes</div>
<svg style="position:absolute;left:1802px;top:586px;" width="10" height="7" viewBox="0 0 10 7"><path d="M1 1.2l4 4 4-4" fill="none" stroke="#222" stroke-width="1.5"/></svg>
<div style="position:absolute;left:1740px;top:662px;width:78px;height:14px;background:#f0f4f7;border-radius:3px;"></div>
<svg style="position:absolute;left:1721px;top:662px;" width="12" height="12" viewBox="0 0 20 18"><path d="M3 9.5V8a4 4 0 0 1 4-4h8" fill="none" stroke="#111" stroke-width="2.3" stroke-linecap="round"/><path d="M13 1.2l3 2.8-3 2.8z" fill="#111" stroke="#111" stroke-width="1.2" stroke-linejoin="round"/><path d="M17 8.5V10a4 4 0 0 1-4 4H5" fill="none" stroke="#111" stroke-width="2.3" stroke-linecap="round"/><path d="M7 11.2L4 14l3 2.8z" fill="#111" stroke="#111" stroke-width="1.2" stroke-linejoin="round"/></svg>
<div id="t61" style="position:absolute;left:1744.5px;top:664.07px;font-size:11.5px;line-height:11.5px;color:#222;font-weight:400;letter-spacing:0.000px;white-space:nowrap;transform:scaleX(0.9153);transform-origin:0 0;">30 minutes</div>
<svg style="position:absolute;left:1802px;top:664px;" width="10" height="7" viewBox="0 0 10 7"><path d="M1 1.2l4 4 4-4" fill="none" stroke="#222" stroke-width="1.5"/></svg>
<div style="position:absolute;left:1740px;top:740px;width:78px;height:14px;background:#f0f4f7;border-radius:3px;"></div>
<svg style="position:absolute;left:1721px;top:740px;" width="12" height="12" viewBox="0 0 20 18"><path d="M3 9.5V8a4 4 0 0 1 4-4h8" fill="none" stroke="#111" stroke-width="2.3" stroke-linecap="round"/><path d="M13 1.2l3 2.8-3 2.8z" fill="#111" stroke="#111" stroke-width="1.2" stroke-linejoin="round"/><path d="M17 8.5V10a4 4 0 0 1-4 4H5" fill="none" stroke="#111" stroke-width="2.3" stroke-linecap="round"/><path d="M7 11.2L4 14l3 2.8z" fill="#111" stroke="#111" stroke-width="1.2" stroke-linejoin="round"/></svg>
<div id="t62" style="position:absolute;left:1744.5px;top:742.07px;font-size:11.5px;line-height:11.5px;color:#222;font-weight:400;letter-spacing:0.000px;white-space:nowrap;transform:scaleX(0.9153);transform-origin:0 0;">30 minutes</div>
<svg style="position:absolute;left:1802px;top:742px;" width="10" height="7" viewBox="0 0 10 7"><path d="M1 1.2l4 4 4-4" fill="none" stroke="#222" stroke-width="1.5"/></svg>
<div style="position:absolute;left:1740px;top:818px;width:78px;height:14px;background:#f0f4f7;border-radius:3px;"></div>
<svg style="position:absolute;left:1721px;top:818px;" width="12" height="12" viewBox="0 0 20 18"><path d="M3 9.5V8a4 4 0 0 1 4-4h8" fill="none" stroke="#111" stroke-width="2.3" stroke-linecap="round"/><path d="M13 1.2l3 2.8-3 2.8z" fill="#111" stroke="#111" stroke-width="1.2" stroke-linejoin="round"/><path d="M17 8.5V10a4 4 0 0 1-4 4H5" fill="none" stroke="#111" stroke-width="2.3" stroke-linecap="round"/><path d="M7 11.2L4 14l3 2.8z" fill="#111" stroke="#111" stroke-width="1.2" stroke-linejoin="round"/></svg>
<div id="t63" style="position:absolute;left:1744.5px;top:820.07px;font-size:11.5px;line-height:11.5px;color:#222;font-weight:400;letter-spacing:0.000px;white-space:nowrap;transform:scaleX(0.9153);transform-origin:0 0;">30 minutes</div>
<svg style="position:absolute;left:1802px;top:820px;" width="10" height="7" viewBox="0 0 10 7"><path d="M1 1.2l4 4 4-4" fill="none" stroke="#222" stroke-width="1.5"/></svg>
<div style="position:absolute;left:232px;top:830px;width:1655px;height:64px;background:#ffffff;border-radius:0px;"></div>
<div style="position:absolute;left:232px;top:830px;width:1660px;height:1px;background:#e6e8eb;border-radius:0px;"></div>
<div style="position:absolute;left:1887px;top:144px;width:5px;height:185px;background:#9a9a9a;border-radius:3px;"></div>
<div style="position:absolute;left:248px;top:843px;width:82px;height:39px;background:#f1f4f7;border:1px solid #e3e6ea;box-sizing:border-box;border-radius:4px;"></div>
<div id="t64" style="position:absolute;left:257px;top:856.15px;font-size:14px;line-height:14px;color:#2f353b;font-weight:400;letter-spacing:0.277px;white-space:nowrap;">33 results</div>
<div id="t65" style="position:absolute;left:231px;top:934.15px;font-size:14px;line-height:14px;color:#98a2ab;font-weight:400;letter-spacing:0.217px;white-space:nowrap;">2025 © zequenze</div>
<div id="t66" style="position:absolute;left:360.8px;top:934.15px;font-size:14px;line-height:14px;color:#0e9be0;font-weight:400;letter-spacing:0.259px;white-space:nowrap;">Terms of service</div>
<div id="t67" style="position:absolute;left:473.5px;top:934.15px;font-size:14px;line-height:14px;color:#98a2ab;font-weight:400;letter-spacing:0.000px;white-space:nowrap;">|</div>
<div id="t68" style="position:absolute;left:482.5px;top:934.15px;font-size:14px;line-height:14px;color:#0e9be0;font-weight:400;letter-spacing:0.093px;white-space:nowrap;">Privacy policy</div>
<div id="t69" style="position:absolute;left:576px;top:934.15px;font-size:14px;line-height:14px;color:#98a2ab;font-weight:400;letter-spacing:0.000px;white-space:nowrap;">|</div>
<div id="t70" style="position:absolute;left:585.1px;top:934.15px;font-size:14px;line-height:14px;color:#0e9be0;font-weight:400;letter-spacing:0.021px;white-space:nowrap;">Changelog</div>
<div id="t71" style="position:absolute;left:1665.2px;top:934.15px;font-size:14px;line-height:14px;color:#98a2ab;-webkit-text-stroke:0.45px #98a2ab;letter-spacing:0.000px;white-space:nowrap;transform:scaleX(0.8954);transform-origin:0 0;">GATE</div>
<div id="t72" style="position:absolute;left:1702px;top:934.15px;font-size:14px;line-height:14px;color:#98a2ab;font-weight:400;letter-spacing:0.318px;white-space:nowrap;">admin portal (dev) v1.2.9-dev</div>
<div style="position:absolute;left:1px;top:243px;width:197px;height:42px;background:none;border:3px solid #ff0000;box-sizing:border-box;border-radius:0px;z-index:5;"></div>
<div style="position:absolute;left:191.2px;top:225.3px;width:39px;height:39px;border-radius:50%;background:#ff0000;border:1.5px solid #222;box-sizing:border-box;z-index:6;"></div>
<div id="t73" style="position:absolute;left:205.5px;top:236.06px;font-size:18px;line-height:18px;color:#ffffff;font-weight:700;letter-spacing:0.000px;white-space:nowrap;z-index:7;-webkit-text-stroke:0.7px #fff;">1</div>
<div style="position:absolute;left:7px;top:323px;width:117px;height:36px;background:none;border:3px solid #ff0000;box-sizing:border-box;border-radius:0px;z-index:5;"></div>
<div style="position:absolute;left:123.6px;top:316.3px;width:39px;height:39px;border-radius:50%;background:#ff0000;border:1.5px solid #222;box-sizing:border-box;z-index:6;"></div>
<div id="t74" style="position:absolute;left:137.9px;top:327.06px;font-size:18px;line-height:18px;color:#ffffff;font-weight:700;letter-spacing:0.000px;white-space:nowrap;z-index:7;-webkit-text-stroke:0.7px #fff;">2</div>
<div style="position:absolute;left:1751px;top:83px;width:73px;height:54px;background:none;border:3px solid #ff0000;box-sizing:border-box;border-radius:0px;z-index:5;"></div>
<div style="position:absolute;left:1810.5px;top:48.0px;width:39px;height:39px;border-radius:50%;background:#ff0000;border:1.5px solid #222;box-sizing:border-box;z-index:6;"></div>
<div id="t75" style="position:absolute;left:1824.8px;top:58.76px;font-size:18px;line-height:18px;color:#ffffff;font-weight:700;letter-spacing:0.000px;white-space:nowrap;z-index:7;-webkit-text-stroke:0.7px #fff;">3</div></body></html>
